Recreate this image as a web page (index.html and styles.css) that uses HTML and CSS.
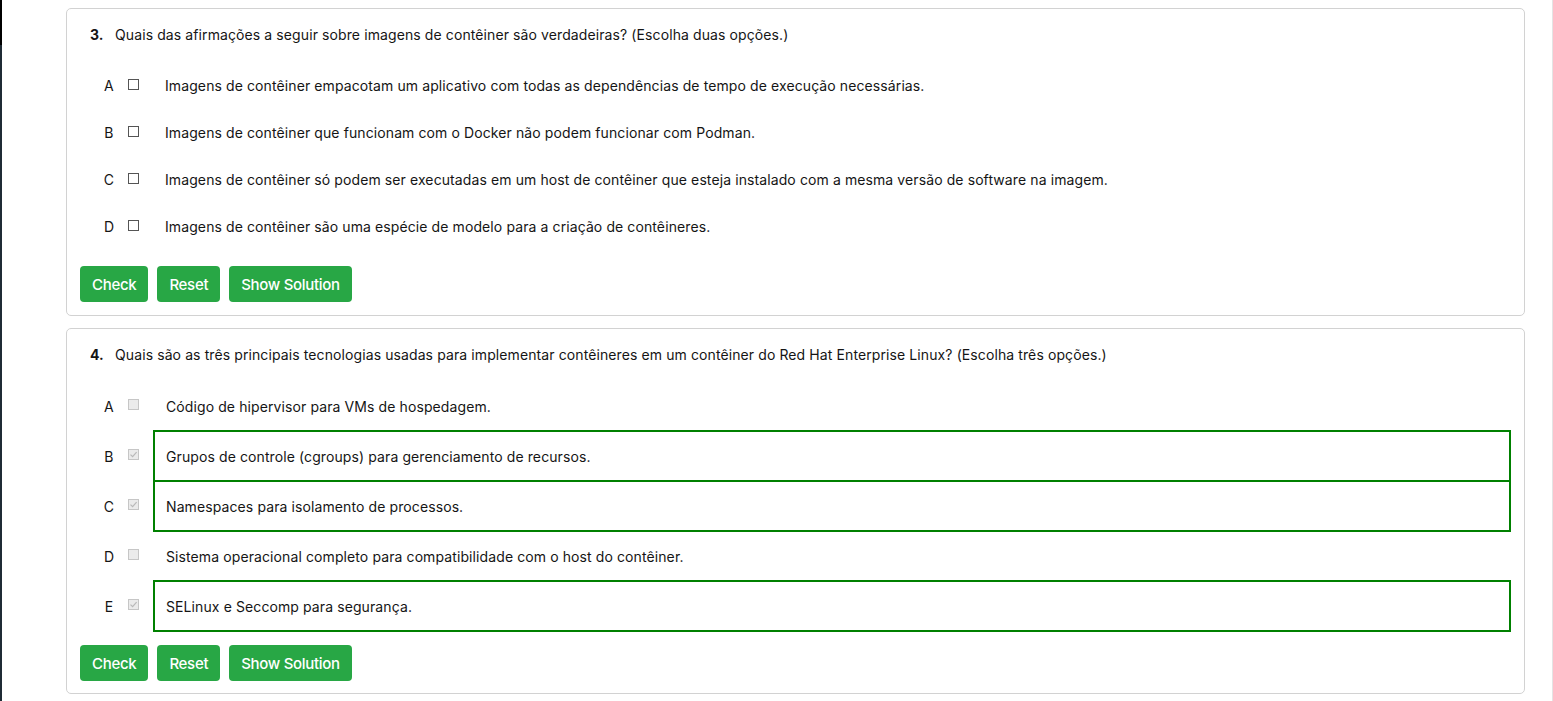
FILE: index.html
```html
<!DOCTYPE html>
<html lang="pt">
<head>
<meta charset="utf-8">
<title>Quiz</title>
<link rel="stylesheet" href="styles.css">
</head>
<body>
<div class="page">
  <div class="edge"></div>
  <main class="content">
    <section class="card">
      <div class="question"><span class="num">3.</span><span class="qtext">Quais das afirmações a seguir sobre imagens de contêiner são verdadeiras? (Escolha duas opções.)</span></div>
      <ul class="options">
        <li class="opt"><span class="letter">A</span><span class="cb"></span><span class="otext">Imagens de contêiner empacotam um aplicativo com todas as dependências de tempo de execução necessárias.</span></li>
        <li class="opt"><span class="letter">B</span><span class="cb"></span><span class="otext">Imagens de contêiner que funcionam com o Docker não podem funcionar com Podman.</span></li>
        <li class="opt"><span class="letter">C</span><span class="cb"></span><span class="otext">Imagens de contêiner só podem ser executadas em um host de contêiner que esteja instalado com a mesma versão de software na imagem.</span></li>
        <li class="opt"><span class="letter">D</span><span class="cb"></span><span class="otext">Imagens de contêiner são uma espécie de modelo para a criação de contêineres.</span></li>
      </ul>
      <div class="actions"><button class="btn">Check</button><button class="btn">Reset</button><button class="btn">Show Solution</button></div>
    </section>
    <section class="card">
      <div class="question"><span class="num">4.</span><span class="qtext">Quais são as três principais tecnologias usadas para implementar contêineres em um contêiner do Red Hat Enterprise Linux? (Escolha três opções.)</span></div>
      <ul class="options solved">
        <li class="opt"><span class="letter">A</span><span class="cb disabled"></span><span class="otext">Código de hipervisor para VMs de hospedagem.</span></li>
        <li class="opt"><span class="letter">B</span><span class="cb disabled"><svg viewBox="0 0 11 11" width="11" height="11"><path d="M2.5 5.6 L4.6 7.6 L8.6 3.2" fill="none" stroke="#b9b9b9" stroke-width="1.2"/></svg></span><span class="otext correct">Grupos de controle (cgroups) para gerenciamento de recursos.</span></li>
        <li class="opt"><span class="letter">C</span><span class="cb disabled"><svg viewBox="0 0 11 11" width="11" height="11"><path d="M2.5 5.6 L4.6 7.6 L8.6 3.2" fill="none" stroke="#b9b9b9" stroke-width="1.2"/></svg></span><span class="otext correct">Namespaces para isolamento de processos.</span></li>
        <li class="opt"><span class="letter">D</span><span class="cb disabled"></span><span class="otext">Sistema operacional completo para compatibilidade com o host do contêiner.</span></li>
        <li class="opt"><span class="letter">E</span><span class="cb disabled"><svg viewBox="0 0 11 11" width="11" height="11"><path d="M2.5 5.6 L4.6 7.6 L8.6 3.2" fill="none" stroke="#b9b9b9" stroke-width="1.2"/></svg></span><span class="otext correct">SELinux e Seccomp para segurança.</span></li>
      </ul>
      <div class="actions"><button class="btn">Check</button><button class="btn">Reset</button><button class="btn">Show Solution</button></div>
    </section>
  </main>
  <div class="rail"></div>
</div>
</body>
</html>
```
FILE: styles.css
```css
* { box-sizing: border-box; }
html, body { margin: 0; padding: 0; height: 701px; overflow: hidden; background: #fff; }
body { font-family: Inter, "Noto Sans", "Liberation Sans", sans-serif; font-size: 14px; letter-spacing: 0.1px; color: #151515; }
.page { display: flex; height: 701px; }
.edge { width: 2px; flex: none; background: linear-gradient(#000 0 45px, #1f2b35 45px); }
.content { flex: 1; padding: 8px 0 0 64px; }
.rail { width: 1px; flex: none; background: #e4e4e4; }
.card { width: 1459px; border: 1px solid #d2d2d2; border-radius: 5px; padding: 16px 13px 13px 13px; margin-bottom: 12px; }
.card:last-child { padding-bottom: 12px; }
.question { display: flex; align-items: baseline; padding-left: 10px; line-height: 20px; }
.num { font-weight: 700; width: 25px; flex: none; }
.options { list-style: none; margin: 17px 0 16px 0; padding: 0; }
.opt { display: flex; align-items: center; height: 47px; }
.letter { width: 20px; margin-left: 19px; text-align: center; flex: none; }
.cb { width: 11px; height: 11px; margin-left: 9px; margin-bottom: 3px; border: 1px solid #555; background: #fff; flex: none; display: flex; }
.cb svg { display: block; margin: -1px; }
.cb.disabled { border-color: #c6c6c6; background: #ebebeb; }
.otext { flex: 1; margin-left: 14px; padding: 0 12px; }
.solved { margin-top: 15px; margin-bottom: 13px; }
.solved .opt { height: auto; }
.solved .opt + .opt { margin-top: -2px; }
.solved .otext { height: 52px; border: 2px solid transparent; padding: 0 11px; display: flex; align-items: center; }
.solved .otext.correct { border-color: #008000; }
.actions { display: flex; gap: 9px; }
.btn { font-family: inherit; font-size: 15px; font-weight: 500; color: #fff; background: #28a745; border: none; border-radius: 4px; height: 36px; padding: 0 12px; letter-spacing: -0.3px; }
```
